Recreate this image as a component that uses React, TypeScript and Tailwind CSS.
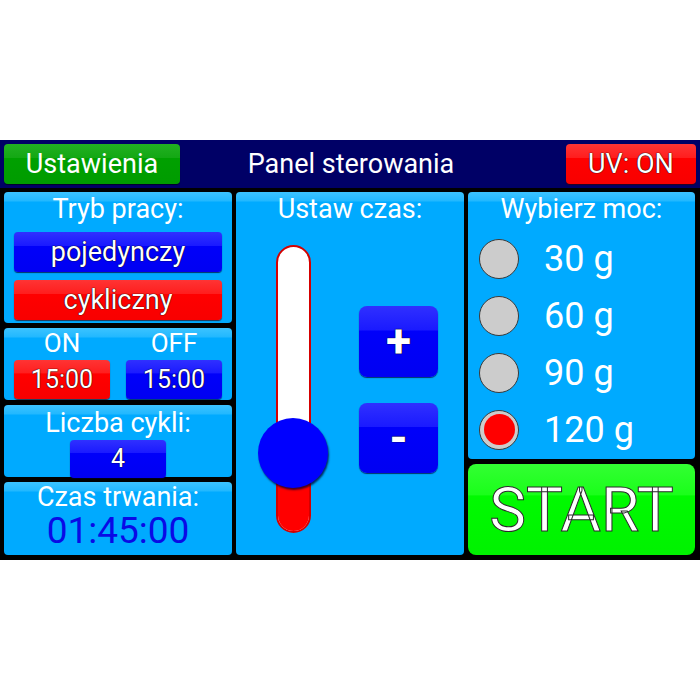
const font = { fontFamily: 'Roboto, "Noto Sans", sans-serif' };

function Panel({ className = '', children }: { className?: string; children: React.ReactNode }) {
  return (
    <div
      className={`rounded-[4px] bg-[linear-gradient(to_bottom,#3cc3ff_0px,#22b8ff_9px,#00aaff_10px,#00aaff_100%)] ${className}`}
    >
      {children}
    </div>
  );
}

const blueBtn =
  'bg-[linear-gradient(to_bottom,#3030ff_0%,#1a1aff_34%,#0000fa_35%,#0000f2_100%)] shadow-[0_1px_1px_rgba(0,0,40,0.7)]';
const redBtn =
  'bg-[linear-gradient(to_bottom,#ff3434_0%,#ff1e1e_34%,#ff0000_35%,#f80000_100%)] shadow-[0_1px_1px_rgba(60,0,0,0.7)]';
const outline = '[text-shadow:0_0_1px_#000,0_0_1px_#000]';

function Radio({ checked, label }: { checked?: boolean; label: string }) {
  return (
    <div className="flex items-center h-[57px]">
      <div className="w-[40px] h-[40px] rounded-full border-[1.5px] border-[#3a3a3a] bg-[#cccccc] flex items-center justify-center">
        {checked && <div className="w-[31px] h-[31px] rounded-full bg-[#ff0000]" />}
      </div>
      <span className="ml-[25px] text-[36px] leading-none text-white">{label}</span>
    </div>
  );
}

export default function App() {
  return (
    <div className="w-[700px] h-[700px] bg-white pt-[140px]" style={font}>
      <div className="w-[700px] h-[420px] bg-black flex flex-col">
        {/* header */}
        <div className="h-[48px] bg-[#000066] flex items-center px-[4px]">
          <div className="w-[176px] h-[40px] rounded-[4px] bg-[linear-gradient(to_bottom,#22b022_0%,#14a814_34%,#00a000_35%,#009c00_100%)] flex items-center justify-center text-white text-[27px] shadow-[0_1px_1px_rgba(0,0,0,0.6)]">
            Ustawienia
          </div>
          <div className="flex-1 text-center text-white text-[27px] pr-[44px]">Panel sterowania</div>
          <div className={`w-[130px] h-[40px] rounded-[4px] ${redBtn} flex items-center justify-center text-white text-[27px] ${outline}`}>
            UV: ON
          </div>
        </div>

        {/* body */}
        <div className="flex gap-[4px] pt-[4px] pl-[4px] pr-[5px]">
          {/* left column */}
          <div className="w-[228px] flex flex-col gap-[5px]">
            <Panel className="h-[131px] flex flex-col items-center px-[10px]">
              <div className="text-white text-[27px] leading-[30px] mt-[2px]">Tryb pracy:</div>
              <div className={`mt-[8px] w-full h-[40px] rounded-[4px] ${blueBtn} flex items-center justify-center text-white text-[27px] ${outline}`}>
                pojedynczy
              </div>
              <div className={`mt-[8px] w-full h-[40px] rounded-[4px] ${redBtn} flex items-center justify-center text-white text-[27px] ${outline}`}>
                cykliczny
              </div>
            </Panel>
            <Panel className="h-[72px] flex justify-between px-[10px]">
              <div className="flex flex-col items-center w-[96px]">
                <div className="text-white text-[26px] leading-[30px]">ON</div>
                <div className={`mt-[2px] w-full h-[39px] rounded-[4px] ${redBtn} flex items-center justify-center text-white text-[25px] ${outline}`}>
                  15:00
                </div>
              </div>
              <div className="flex flex-col items-center w-[96px]">
                <div className="text-white text-[26px] leading-[30px]">OFF</div>
                <div className={`mt-[2px] w-full h-[39px] rounded-[4px] ${blueBtn} flex items-center justify-center text-white text-[25px] ${outline}`}>
                  15:00
                </div>
              </div>
            </Panel>
            <Panel className="h-[72px] flex flex-col items-center">
              <div className="text-white text-[27px] leading-[30px] mt-[3px]">Liczba cykli:</div>
              <div className={`mt-[2px] w-[96px] h-[38px] rounded-[4px] ${blueBtn} flex items-center justify-center text-white text-[25px] ${outline}`}>
                4
              </div>
            </Panel>
            <Panel className="h-[73px] flex flex-col items-center">
              <div className="text-white text-[27px] leading-[28px] mt-[1px]">Czas trwania:</div>
              <div className="text-[#0a0ae6] text-[37px] leading-[40px]">01:45:00</div>
            </Panel>
          </div>

          {/* middle */}
          <Panel className="w-[228px] h-[363px] flex flex-col items-center">
            <div className="text-white text-[27px] leading-[30px] mt-[2px]">Ustaw czas:</div>
            <div className="w-full flex mt-[21px]">
              <div className="ml-[40px] relative w-[35px] h-[288px] rounded-full border-2 border-[#d40000] bg-white overflow-hidden">
                <div className="absolute left-0 right-0 bottom-0 h-[80px] bg-[#ff0000]" />
              </div>
              <div className="relative w-0">
                <div className="absolute left-[-53px] top-[173px] w-[70px] h-[70px] rounded-full bg-[#0000ff] shadow-[1px_2px_2px_rgba(0,0,40,0.75)]" />
              </div>
              <div className="ml-[48px] flex flex-col pt-[61px]">
                <div className={`w-[79px] h-[71px] rounded-[8px] ${blueBtn} flex items-center justify-center text-white text-[46px] font-bold ${outline}`}>
                  +
                </div>
                <div className={`mt-[26px] w-[79px] h-[70px] rounded-[8px] ${blueBtn} flex items-center justify-center text-white text-[46px] font-bold ${outline}`}>
                  -
                </div>
              </div>
            </div>
          </Panel>

          {/* right */}
          <div className="w-[227px] flex flex-col gap-[5px]">
            <Panel className="h-[267px] flex flex-col">
              <div className="text-white text-[27px] leading-[30px] mt-[2px] text-center">Wybierz moc:</div>
              <div className="flex flex-col pl-[11px] mt-[6px]">
                <Radio label="30 g" />
                <Radio label="60 g" />
                <Radio label="90 g" />
                <Radio label="120 g" checked />
              </div>
            </Panel>
            <div className="h-[91px] rounded-[8px] bg-[linear-gradient(to_bottom,#33ff33_0%,#1aff1a_34%,#00fa00_35%,#00f200_100%)] flex items-center justify-center text-white text-[62px] [-webkit-text-stroke:1px_#2a2a2a]">
              START
            </div>
          </div>
        </div>
      </div>
    </div>
  );
}
